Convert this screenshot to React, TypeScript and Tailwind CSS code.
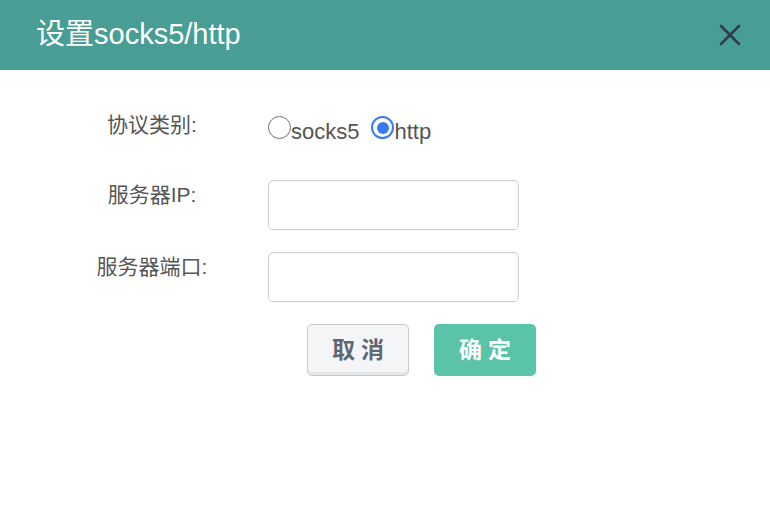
import { useState } from 'react'

const font = { fontFamily: '"Liberation Sans", "Noto Sans CJK SC", sans-serif' }

const Radio = ({ checked, label, onClick }: { checked: boolean; label: string; onClick: () => void }) => (
  <label className="flex items-start cursor-pointer" onClick={onClick}>
    <span
      className={
        checked
          ? 'mt-[1px] w-[23px] h-[23px] rounded-full border-[2.5px] border-[#3a7bef] bg-white flex items-center justify-center'
          : 'mt-[1px] w-[23px] h-[23px] rounded-full border-[1.5px] border-[#6f6f6f] bg-white'
      }
    >
      {checked && <span className="w-[12px] h-[12px] rounded-full bg-[#3a7bef]" />}
    </span>
    <span className="mt-[4px] text-[22px] leading-[26px] text-[#555]">{label}</span>
  </label>
)

export default function App() {
  const [proto, setProto] = useState<'socks5' | 'http'>('http')
  const [ip, setIp] = useState('')
  const [port, setPort] = useState('')

  return (
    <div className="w-[770px] h-[532px] bg-white" style={font}>
      <div className="h-[70px] bg-[#489e94] flex items-center justify-between pl-[36px] pr-[29px]">
        <h1 className="text-[29px] text-white font-normal">设置socks5/http</h1>
        <button className="w-[22px] h-[22px]">
          <svg viewBox="0 0 22 22" width="22" height="22">
            <path d="M2 2 L20 20 M20 2 L2 20" stroke="#2e3e4e" strokeWidth="2.6" strokeLinecap="round" />
          </svg>
        </button>
      </div>

      <div className="pt-[35px] pl-[52px]">
        <div className="flex items-center h-[50px]">
          <div className="w-[200px] text-center text-[21px] text-[#555] -mt-[10px]">协议类别:</div>
          <div className="ml-[16px] flex gap-[12px]">
            <Radio checked={proto === 'socks5'} label="socks5" onClick={() => setProto('socks5')} />
            <Radio checked={proto === 'http'} label="http" onClick={() => setProto('http')} />
          </div>
        </div>

        <div className="flex items-center h-[50px] mt-[25px]">
          <div className="w-[200px] text-center text-[21px] text-[#555] -mt-[20px]">服务器IP:</div>
          <input
            value={ip}
            onChange={(e) => setIp(e.target.value)}
            className="ml-[16px] w-[251px] h-[50px] border border-[#cfcfcf] rounded-[5px] px-3 text-[18px] outline-none shadow-[inset_0_1px_1px_rgba(0,0,0,0.04)]"
          />
        </div>

        <div className="flex items-center h-[50px] mt-[22px]">
          <div className="w-[200px] text-center text-[21px] text-[#555] -mt-[20px]">服务器端口:</div>
          <input
            value={port}
            onChange={(e) => setPort(e.target.value)}
            className="ml-[16px] w-[251px] h-[50px] border border-[#cfcfcf] rounded-[5px] px-3 text-[18px] outline-none shadow-[inset_0_1px_1px_rgba(0,0,0,0.04)]"
          />
        </div>

        <div className="flex mt-[22px] ml-[255px] gap-[25px]">
          <button className="w-[102px] h-[52px] rounded-[5px] border border-[#c9c9c9] bg-[#f4f5f7] text-[#5e6776] text-[23px] font-bold tracking-[6px] pl-[6px] shadow-[inset_0_-3px_0_rgba(0,0,0,0.06)]">
            取消
          </button>
          <button className="w-[102px] h-[52px] rounded-[5px] bg-[#5bc3a7] text-white text-[23px] font-bold tracking-[6px] pl-[6px]">
            确定
          </button>
        </div>
      </div>
    </div>
  )
}
